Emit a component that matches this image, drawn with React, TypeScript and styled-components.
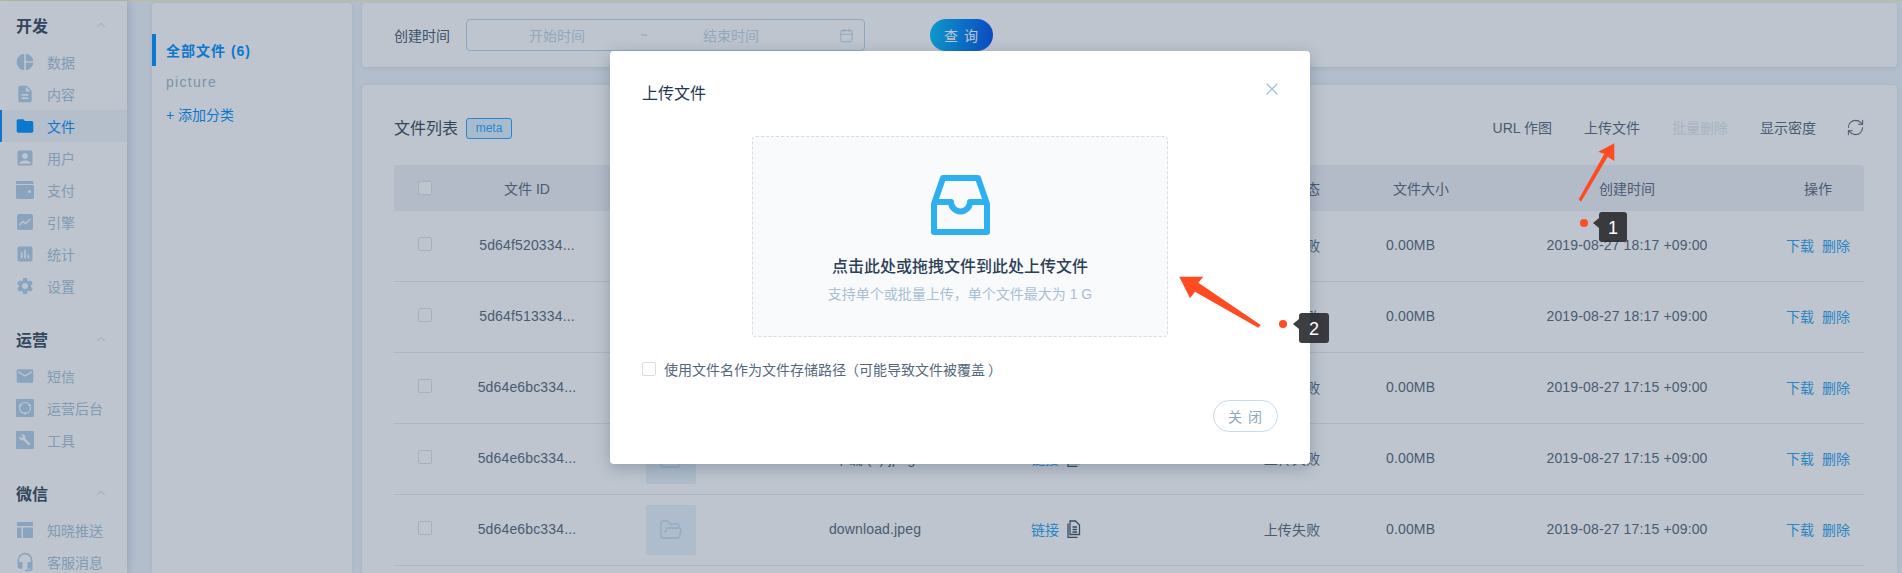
import React from 'react'
import styled, { createGlobalStyle } from 'styled-components'
import { Calendar, ChevronUp, FolderOpen, RefreshCw, X } from 'lucide-react'
import {
  MdAccountBox,
  MdAssessment,
  MdDescription,
  MdEmail,
  MdFolder,
  MdHeadsetMic,
  MdPieChart,
  MdSettings,
} from 'react-icons/md'

const GlobalStyle = createGlobalStyle`
  html, body {
    margin: 0;
    padding: 0;
    height: 573px;
    overflow: hidden;
    background: #f0f5fc;
    font-family: "Liberation Sans", "Noto Sans CJK SC", sans-serif;
    font-size: 14px;
    color: #58687c;
  }
  * { box-sizing: border-box; }
`

const Page = styled.div`
  position: relative;
  width: 1902px;
  height: 573px;
  overflow: hidden;
  display: flex;
  flex-direction: column;
`
const TopStrip = styled.div`
  height: 1px;
  flex-shrink: 0;
  background: #fff3b0;
`
const Body = styled.div`
  flex: 1;
  min-height: 0;
  display: flex;
`

/* sidebar */
const Sidebar = styled.aside`
  width: 127px;
  flex-shrink: 0;
  background: #fff;
  padding-top: 3px;
  box-shadow: 2px 0 8px rgba(120, 150, 190, 0.35);
`
const Group = styled.div`
  margin-bottom: 16px;
`
const GroupTitle = styled.div`
  height: 42px;
  display: flex;
  align-items: center;
  justify-content: space-between;
  padding: 0 19px 0 16px;
  font-size: 16px;
  font-weight: 700;
  color: #38495e;
  svg { color: #b4d0e9; }
`
const NavRow = styled.div<{ $active?: boolean }>`
  height: 32px;
  display: flex;
  align-items: center;
  gap: 13px;
  padding-left: ${p => (p.$active ? 14 : 16)}px;
  color: ${p => (p.$active ? '#0090ff' : '#a8c3dc')};
  background: ${p => (p.$active ? '#f3f6fb' : 'transparent')};
  border-left: ${p => (p.$active ? '2px solid #0090ff' : 'none')};
`
const NavIcon = styled.span<{ $active?: boolean }>`
  width: 18px;
  height: 20px;
  flex-shrink: 0;
  display: flex;
  align-items: center;
  justify-content: center;
  color: ${p => (p.$active ? '#0090ff' : '#b4d0e9')};
  svg { flex-shrink: 0; }
`

/* category panel */
const Categories = styled.section`
  width: 200px;
  margin: 2px 0 0 25px;
  flex-shrink: 0;
  background: #fff;
  border-radius: 4px 4px 0 0;
  padding-top: 31px;
  box-shadow: 0 0 4px rgba(150, 175, 205, 0.3);
`
const Category = styled.div<{ $active?: boolean; $add?: boolean }>`
  height: 32px;
  display: flex;
  align-items: center;
  padding-left: ${p => (p.$active ? 10 : 14)}px;
  letter-spacing: ${p => (p.$add ? 0 : p.$active ? 1 : 1.3)}px;
  font-weight: ${p => (p.$active ? 700 : 400)};
  color: ${p => (p.$active || p.$add ? '#0090ff' : '#9fb8ce')};
  border-left: ${p => (p.$active ? '4px solid #0090ff' : 'none')};
`

/* main column */
const Main = styled.main`
  width: 1535px;
  margin: 2px 0 0 10px;
  flex-shrink: 0;
  display: flex;
  flex-direction: column;
  gap: 18px;
`
const FilterCard = styled.section`
  height: 64px;
  flex-shrink: 0;
  background: #fff;
  border-radius: 4px;
  display: flex;
  align-items: center;
  padding: 0 32px;
  box-shadow: 0 1px 4px rgba(150, 175, 205, 0.3);
`
const FilterLabel = styled.span`
  width: 72px;
  color: #465a72;
`
const RangeInput = styled.div`
  width: 399px;
  height: 32px;
  border: 1px solid #b8d6ee;
  border-radius: 4px;
  display: flex;
  align-items: center;
  padding: 0 10px 0 62px;
  color: #c2d6e8;
  svg { color: #b4d0e9; margin-left: auto; }
`
const RangePart = styled.span`
  width: 56px;
`
const RangeSep = styled.span`
  width: 118px;
  text-align: center;
  font-size: 12px;
`
const QueryButton = styled.button`
  width: 63px;
  height: 32px;
  margin-left: 65px;
  border: 0;
  border-radius: 16px;
  background: linear-gradient(90deg, #03befb, #0051f0);
  color: #fff;
  font: inherit;
  letter-spacing: 1px;
  padding: 0;
`
const ListCard = styled.section`
  flex: 1;
  min-height: 0;
  background: #fff;
  border-radius: 4px 4px 0 0;
  padding: 31px 32px 0;
  box-shadow: 0 0 4px rgba(150, 175, 205, 0.3);
`
const Toolbar = styled.div`
  height: 22px;
  display: flex;
  align-items: center;
  margin-bottom: 27px;
`
const ListTitle = styled.h2`
  margin: 0;
  font-size: 16px;
  font-weight: 400;
  color: #38495e;
`
const MetaTag = styled.span`
  width: 46px;
  height: 21px;
  margin: 2px 0 0 8px;
  border: 1px solid #2ba5ff;
  border-radius: 3px;
  background: #ddf3ff;
  color: #2ba5ff;
  font-size: 12px;
  display: flex;
  align-items: center;
  justify-content: center;
`
const ToolbarActions = styled.div`
  margin-left: auto;
  display: flex;
  align-items: center;
  gap: 32px;
  svg { margin-left: -2px; }
`
const ToolAction = styled.span<{ $disabled?: boolean }>`
  color: ${p => (p.$disabled ? '#e0e6ed' : '#58687c')};
`

const columns = '56px 154px 136px 270px 230px 104px 154px 258px 108px'

const HeadRow = styled.div`
  width: 1470px;
  height: 46px;
  display: grid;
  grid-template-columns: ${columns};
  align-items: center;
  background: #f1f1f7;
  border-radius: 4px 4px 0 0;
  color: #58687c;
`
const HeadCell = styled.div<{ $pad?: number }>`
  text-align: ${p => (p.$pad ? 'left' : 'center')};
  padding-left: ${p => p.$pad ?? 0}px;
`
const Row = styled.div`
  width: 1470px;
  height: 71px;
  display: grid;
  grid-template-columns: ${columns};
  align-items: center;
  border-bottom: 1px solid #e7eaee;
  color: #58687c;
`
const Cell = styled.div<{ $pad?: number }>`
  display: flex;
  align-items: center;
  justify-content: ${p => (p.$pad ? 'flex-start' : 'center')};
  padding: 0 0 2px ${p => p.$pad ?? 0}px;
  gap: 8px;
  letter-spacing: 0.15px;
`
const Check = styled.span`
  display: block;
  width: 14px;
  height: 14px;
  border-radius: 2px;
  border: 1px solid #dfe3e8;
  background: #fff;
  flex-shrink: 0;
`
const CheckCell = styled.div<{ $lift?: number }>`
  padding: 0 0 ${p => p.$lift ?? 0}px 24px;
`
const Thumb = styled.div`
  width: 50px;
  height: 50px;
  margin-left: 42px;
  border-radius: 2px;
  background: #e9f3fb;
  color: #c9dff2;
  display: flex;
  align-items: center;
  justify-content: center;
`
const Link = styled.span`
  color: #2ba4f1;
  letter-spacing: 0;
`
const DocGlyph = styled.svg`
  color: #3f5269;
  flex-shrink: 0;
`

/* dialog */
const Scrim = styled.div`
  position: absolute;
  inset: 0;
  background: rgba(40, 64, 92, 0.3);
`
const Modal = styled.div`
  position: absolute;
  left: 610px;
  top: 51px;
  width: 700px;
  height: 413px;
  background: #fff;
  border-radius: 4px;
  padding: 31px 32px 0;
  box-shadow: 0 4px 16px rgba(30, 50, 80, 0.28);
  display: flex;
  flex-direction: column;
`
const ModalTitle = styled.h3`
  margin: 0 0 30px;
  height: 24px;
  line-height: 24px;
  font-size: 16px;
  font-weight: 400;
  color: #26384e;
`
const CloseIcon = styled.span`
  position: absolute;
  right: 28px;
  top: 28px;
  color: #a6c2da;
  display: flex;
`
const DropZone = styled.div`
  width: 416px;
  height: 201px;
  align-self: center;
  background: #f9fafc;
  border: 1px dashed #d8dde3;
  border-radius: 4px;
  display: flex;
  flex-direction: column;
  align-items: center;
  padding-top: 38px;
`
const DropTitle = styled.div`
  margin-top: 21px;
  line-height: 22px;
  font-size: 16px;
  font-weight: 500;
  color: #2c3f55;
`
const DropHint = styled.div`
  margin-top: 5px;
  line-height: 22px;
  font-size: 14px;
  color: #a9bfd3;
`
const CheckRow = styled.label`
  margin-top: 24px;
  display: flex;
  align-items: center;
  gap: 8px;
  height: 16px;
  color: #55677c;
  font-feature-settings: "halt";
`
const Paren = styled.span<{ $gap: number }>`
  margin-left: ${p => p.$gap}px;
`
const ModalCheck = styled(Check)`
  border-color: #d8dde3;
`
const CloseButton = styled.button`
  align-self: flex-end;
  width: 65px;
  height: 32px;
  margin: 23px 0 0;
  padding: 0;
  border: 1px solid #c7dcea;
  border-radius: 16px;
  background: #fff;
  color: #8ba7bf;
  font: inherit;
  font-size: 14px;
  letter-spacing: 1px;
`

/* screenshot annotations */
const ArrowLayer = styled.svg`
  position: absolute;
  left: 0;
  top: 0;
`
const Dot = styled.span<{ $x: number; $y: number }>`
  position: absolute;
  left: ${p => p.$x - 4}px;
  top: ${p => p.$y - 4}px;
  width: 8px;
  height: 8px;
  border-radius: 50%;
  background: #ff4b22;
`
const Callout = styled.span<{ $x: number; $y: number; $w: number; $h: number }>`
  position: absolute;
  left: ${p => p.$x}px;
  top: ${p => p.$y}px;
  width: ${p => p.$w}px;
  height: ${p => p.$h}px;
  padding-top: 2px;
  border-radius: 3px;
  background: rgba(44, 46, 50, 0.92);
  color: #fff;
  font-size: 18px;
  display: flex;
  align-items: center;
  justify-content: center;
  &::before {
    content: '';
    position: absolute;
    left: -6px;
    top: 6px;
    border-style: solid;
    border-width: 5px 6px 5px 0;
    border-color: transparent rgba(44, 46, 50, 0.92) transparent transparent;
  }
`

const WalletIcon = () => (
  <svg width="18" height="18" viewBox="0 0 18 18" fill="currentColor">
    <path fillRule="evenodd" d="M2 0h14a1.500 1.500 0 0 1 1.500 1.500V3H.600A1.500 1.500 0 0 1 2 0zM1 4h15.500A1.500 1.500 0 0 1 18 5.500v11a1.500 1.500 0 0 1-1.500 1.500h-15A1.500 1.500 0 0 1 0 16.500V5a1 1 0 0 1 1-1zm11 6.500a1.500 1.500 0 1 0 3 0 1.500 1.500 0 0 0-3 0z" />
  </svg>
)
const TrendIcon = () => (
  <svg width="18" height="18" viewBox="0 0 18 18">
    <rect x="1" y="1" width="16" height="16" rx="2" fill="currentColor" />
    <path d="M3.500 12l3.500-3.500 2.500 2L14.500 6" stroke="#fff" strokeWidth="1.500" fill="none" />
  </svg>
)
const OpsIcon = () => (
  <svg width="18" height="18" viewBox="0 0 18 18">
    <rect width="18" height="18" rx="1" fill="currentColor" />
    <circle cx="9" cy="9" r="5.500" stroke="#fff" strokeWidth="1.200" fill="none" />
    <circle cx="4.500" cy="6" r="1.200" fill="#fff" />
    <circle cx="13.500" cy="6" r="1.200" fill="#fff" />
    <circle cx="9" cy="14.500" r="1.200" fill="#fff" />
  </svg>
)
const WrenchIcon = () => (
  <svg width="18" height="18" viewBox="0 0 18 18">
    <rect width="18" height="18" rx="1" fill="currentColor" />
    <path d="M5 3.500a3.200 3.200 0 0 1 4.200 4.100l5.300 5.300-1.700 1.700-5.300-5.300A3.200 3.200 0 0 1 3.400 5.100l2 2 1.600-1.600z" fill="#fff" />
  </svg>
)
const LayoutIcon = () => (
  <svg width="18" height="18" viewBox="0 0 18 18" fill="currentColor">
    <rect x="1" y="1" width="16" height="4" />
    <rect x="1" y="6.500" width="4.500" height="10.500" rx="0.500" />
    <rect x="7" y="6.500" width="10" height="10.500" rx="0.500" />
  </svg>
)
const DocCopyIcon = () => (
  <DocGlyph width="14" height="18" viewBox="0 0 14 18" fill="none" stroke="currentColor" strokeWidth="1.300">
    <path d="M3 14.500V1h5.500L12.500 5v9.500z" />
    <path d="M1 3.500v14h9.500" />
    <path d="M5.500 7h4.500M5.500 9.500h4.500M5.500 12h4.500" />
  </DocGlyph>
)
const InboxIcon = () => (
  <svg width="59" height="60" viewBox="0 0 59 60" fill="none" stroke="#2eaff0" strokeWidth="6" strokeLinejoin="round">
    <path d="M12 3h35l9 26v28H3V29z" />
    <path d="M3 27h17a9.500 9.500 0 0 0 19 0h17" />
  </svg>
)

const navGroups = [
  {
    title: '开发',
    items: [
      { label: '数据', icon: <MdPieChart size={20} /> },
      { label: '内容', icon: <MdDescription size={20} /> },
      { label: '文件', icon: <MdFolder size={20} />, active: true },
      { label: '用户', icon: <MdAccountBox size={20} /> },
      { label: '支付', icon: <WalletIcon /> },
      { label: '引擎', icon: <TrendIcon /> },
      { label: '统计', icon: <MdAssessment size={20} /> },
      { label: '设置', icon: <MdSettings size={20} /> },
    ],
  },
  {
    title: '运营',
    items: [
      { label: '短信', icon: <MdEmail size={20} /> },
      { label: '运营后台', icon: <OpsIcon /> },
      { label: '工具', icon: <WrenchIcon /> },
    ],
  },
  {
    title: '微信',
    items: [
      { label: '知晓推送', icon: <LayoutIcon /> },
      { label: '客服消息', icon: <MdHeadsetMic size={20} /> },
    ],
  },
]

const files = [
  { id: '5d64f520334...', name: 'download (3).jpeg', time: '2019-08-27 18:17 +09:00' },
  { id: '5d64f513334...', name: 'download (2).jpeg', time: '2019-08-27 18:17 +09:00' },
  { id: '5d64e6bc334...', name: 'download (1).jpeg', time: '2019-08-27 17:15 +09:00' },
  { id: '5d64e6bc334...', name: '下载 (1).jpeg', time: '2019-08-27 17:15 +09:00' },
  { id: '5d64e6bc334...', name: 'download.jpeg', time: '2019-08-27 17:15 +09:00' },
  { id: '5d64e6bc334...', name: 'download.jpeg', time: '2019-08-27 17:15 +09:00' },
]

export default function App() {
  return (
    <Page>
      <GlobalStyle />
      <TopStrip />
      <Body>
        <Sidebar>
          {navGroups.map(group => (
            <Group key={group.title}>
              <GroupTitle>
                {group.title}
                <ChevronUp size={14} strokeWidth={1.5} />
              </GroupTitle>
              {group.items.map(item => (
                <NavRow key={item.label} $active={item.active}>
                  <NavIcon $active={item.active}>{item.icon}</NavIcon>
                  {item.label}
                </NavRow>
              ))}
            </Group>
          ))}
        </Sidebar>

        <Categories>
          <Category $active>全部文件 (6)</Category>
          <Category>picture</Category>
          <Category $add>+ 添加分类</Category>
        </Categories>

        <Main>
          <FilterCard>
            <FilterLabel>创建时间</FilterLabel>
            <RangeInput>
              <RangePart>开始时间</RangePart>
              <RangeSep>~</RangeSep>
              <RangePart>结束时间</RangePart>
              <Calendar size={15} strokeWidth={1.5} />
            </RangeInput>
            <QueryButton>查 询</QueryButton>
          </FilterCard>

          <ListCard>
            <Toolbar>
              <ListTitle>文件列表</ListTitle>
              <MetaTag>meta</MetaTag>
              <ToolbarActions>
                <ToolAction>URL 作图</ToolAction>
                <ToolAction>上传文件</ToolAction>
                <ToolAction $disabled>批量删除</ToolAction>
                <ToolAction>显示密度</ToolAction>
                <RefreshCw size={19} strokeWidth={1.3} />
              </ToolbarActions>
            </Toolbar>

            <HeadRow>
              <CheckCell><Check /></CheckCell>
              <HeadCell>文件 ID</HeadCell>
              <HeadCell>预览</HeadCell>
              <HeadCell>文件名</HeadCell>
              <HeadCell $pad={21}>链接</HeadCell>
              <HeadCell>上传状态</HeadCell>
              <HeadCell>文件大小</HeadCell>
              <HeadCell>创建时间</HeadCell>
              <HeadCell $pad={48}>操作</HeadCell>
            </HeadRow>

            {files.map((file, index) => (
              <Row key={index}>
                <CheckCell $lift={5}><Check /></CheckCell>
                <Cell>{file.id}</Cell>
                <Thumb><FolderOpen size={24} strokeWidth={1.8} /></Thumb>
                <Cell>{file.name}</Cell>
                <Cell $pad={21}><Link>链接</Link><DocCopyIcon /></Cell>
                <Cell>上传失败</Cell>
                <Cell $pad={42}>0.00MB</Cell>
                <Cell>{file.time}</Cell>
                <Cell $pad={30}><Link>下载</Link><Link>删除</Link></Cell>
              </Row>
            ))}
          </ListCard>
        </Main>
      </Body>

      <Scrim />

      <Modal>
        <ModalTitle>上传文件</ModalTitle>
        <CloseIcon><X size={20} strokeWidth={1.6} /></CloseIcon>
        <DropZone>
          <InboxIcon />
          <DropTitle>点击此处或拖拽文件到此处上传文件</DropTitle>
          <DropHint>支持单个或批量上传，单个文件最大为 1 G</DropHint>
        </DropZone>
        <CheckRow>
          <ModalCheck />
          <span>
            使用文件名作为文件存储路径<Paren $gap={6}>（</Paren>可能导致文件被覆盖<Paren $gap={3}>）</Paren>
          </span>
        </CheckRow>
        <CloseButton>关 闭</CloseButton>
      </Modal>

      <ArrowLayer width="1902" height="573" viewBox="0 0 1902 573">
        <polygon fill="#ff4b22" points="1614.300,143.300 1614.300,161 1607.700,156.700 1581,201.700 1578.700,199.300 1604.300,154 1598.300,151.700" />
        <polygon fill="#ff4b22" points="1179.300,276.700 1203.300,276.700 1198.300,282.700 1260.700,325 1258.300,327.700 1195,291.700 1190,298.300" />
      </ArrowLayer>
      <Dot $x={1584} $y={223} />
      <Callout $x={1599} $y={212} $w={28} $h={30}>1</Callout>
      <Dot $x={1283} $y={324} />
      <Callout $x={1299} $y={313} $w={30} $h={30}>2</Callout>
    </Page>
  )
}
